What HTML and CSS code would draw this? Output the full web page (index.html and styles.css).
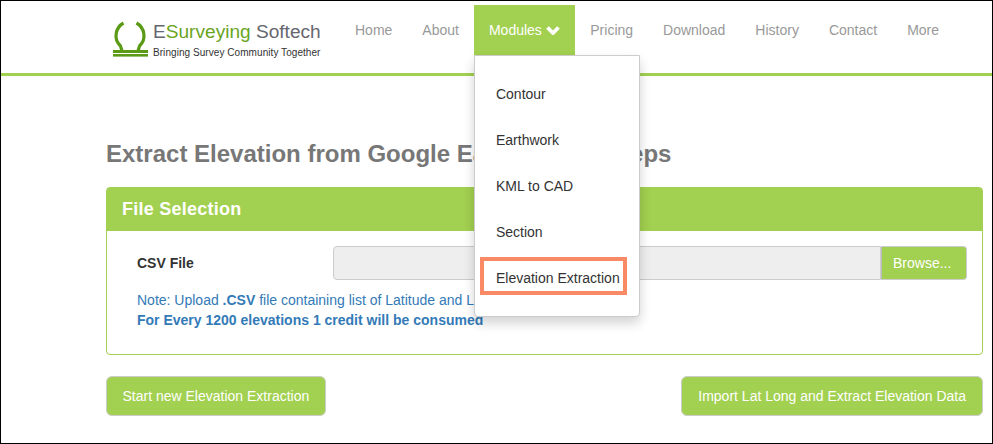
FILE: index.html
```html
<!DOCTYPE html>
<html lang="en">
<head>
<meta charset="utf-8">
<title>Extract Elevation</title>
<link rel="stylesheet" href="styles.css">
</head>
<body>
<div class="frame">
  <header class="topbar">
    <a class="brand" href="#">
      <svg class="brand-icon" width="36" height="36" viewBox="0 0 36 36" aria-hidden="true">
        <path d="M11.5 2 C3.5 6.5 1 18 8.5 25 L10 30" fill="none" stroke="#5a9a14" stroke-width="3.2"/>
        <path d="M24.5 2 C32.5 6.5 35 18 27.5 25 L26 30" fill="none" stroke="#5a9a14" stroke-width="3.2"/>
        <rect x="1" y="29" width="35" height="3" fill="#5a9a14"/>
        <rect x="1" y="33" width="35" height="2.6" fill="#5a9a14"/>
      </svg>
      <span class="brand-text">
        <span class="brand-name">E<span class="brand-green">Surveying</span> Softech</span>
        <span class="brand-tag">Bringing Survey Community Together</span>
      </span>
    </a>
    <nav class="nav">
      <a href="#">Home</a>
      <a href="#">About</a>
      <div class="nav-dd">
        <a class="active" href="#">Modules
          <svg class="chev" width="14" height="10" viewBox="0 0 14 10" aria-hidden="true"><path d="M1.5 2.5 L7 8 L12.5 2.5" fill="none" stroke="#fff" stroke-width="3.8"/></svg>
        </a>
        <ul class="menu">
          <li>Contour</li>
          <li>Earthwork</li>
          <li>KML to CAD</li>
          <li>Section</li>
          <li class="marked">Elevation Extraction</li>
        </ul>
      </div>
      <a href="#">Pricing</a>
      <a href="#">Download</a>
      <a href="#">History</a>
      <a href="#">Contact</a>
      <a href="#">More</a>
    </nav>
  </header>
  <main class="content">
    <h1>Extract Elevation from Google Earth in Few Steps</h1>
    <section class="panel">
      <h2>File Selection</h2>
      <div class="panel-body">
        <div class="file-row">
          <label>CSV File</label>
          <div class="file-input">
            <div class="file-box"></div>
            <div class="browse">Browse...</div>
          </div>
        </div>
        <p class="note">Note: Upload <b>.CSV</b> file containing list of Latitude and Longitude<br><b>For Every 1200 elevations 1 credit will be consumed</b></p>
      </div>
    </section>
    <div class="actions">
      <button class="btn btn-start">Start new Elevation Extraction</button>
      <button class="btn">Import Lat Long and Extract Elevation Data</button>
    </div>
  </main>
</div>
</body>
</html>
```
FILE: styles.css
```css
*, *::after { box-sizing: border-box; }
html, body { margin: 0; padding: 0; }
body { font-family: "Liberation Sans", Arial, sans-serif; font-size: 14px; color: #333; background: #fff; }
.frame { width: 993px; height: 444px; border: 1px solid #000; overflow: hidden; }
.topbar { height: 75px; border-bottom: 3px solid #a2d050; display: flex; padding: 4px 0 0 111px; }
.brand { display: flex; align-items: flex-start; gap: 5px; width: 228px; padding-top: 16px; text-decoration: none; }
.brand-text { display: flex; flex-direction: column; }
.brand-name { font-size: 19.1px; line-height: 22px; color: #66666e; white-space: nowrap; }
.brand-green { color: #6aa51f; }
.brand-tag { font-size: 10px; line-height: 12px; margin-top: 4px; letter-spacing: .06px; color: #333; white-space: nowrap; }
.nav { display: flex; align-items: flex-start; }
.nav a { display: block; height: 50px; padding: 15px; line-height: 20px; color: #999; text-decoration: none; white-space: nowrap; }
.nav-dd { position: relative; }
.nav a.active { background: #a2d050; color: #fff; padding-right: 15.5px; }
.menu { position: absolute; left: 0; top: 50px; width: 166px; height: 262px; margin: 0; padding: 15px 0 0; list-style: none; background: #fff; border: 1px solid #ccc; border-radius: 0 0 4px 4px; box-shadow: 0 6px 12px rgba(0,0,0,.175); z-index: 5; }
.menu li { position: relative; height: 46px; padding: 13px 20px 13px 21px; line-height: 20px; color: #333; white-space: nowrap; }
.menu li.marked::after { content: ""; position: absolute; left: 5px; top: 2px; width: 147px; height: 38px; border: 4px solid #f98a65; }
.content { padding: 0 9px 0 105px; }
h1 { margin: 63px 0 0; height: 48px; font-size: 24px; line-height: 30px; font-weight: 700; color: #777; }
.panel { height: 168px; border: 1px solid #a2d050; border-radius: 4px; }
.panel h2 { margin: 0; height: 43px; background: #a2d050; color: #fff; font-size: 18px; line-height: 42px; padding-left: 15px; letter-spacing: .25px; }
.panel-body { padding: 15px 15px 0 30px; }
.file-row { display: flex; align-items: center; height: 34px; }
.file-row label { width: 196px; font-weight: 700; color: #333; }
.file-input { display: flex; width: 634px; height: 34px; }
.file-box { flex: 1; background: #eee; border: 1px solid #ccc; border-radius: 4px 0 0 4px; }
.browse { width: 86px; background: #a2d050; color: #fff; border: 1px solid #ccc; border-left-color: #bbb; border-radius: 0 4px 4px 0; line-height: 32px; padding-left: 11px; }
.note { margin: 10px 0 0; line-height: 20px; color: #337ab7; }
.actions { display: flex; justify-content: space-between; margin-top: 21px; }
.btn { height: 40px; padding: 0 16px; font: 14px/20px "Liberation Sans", Arial, sans-serif; color: #fff; background: #a2d050; border: 1px solid #ccc; border-radius: 6px; }
.btn-start { padding: 0 15.5px; }
```
